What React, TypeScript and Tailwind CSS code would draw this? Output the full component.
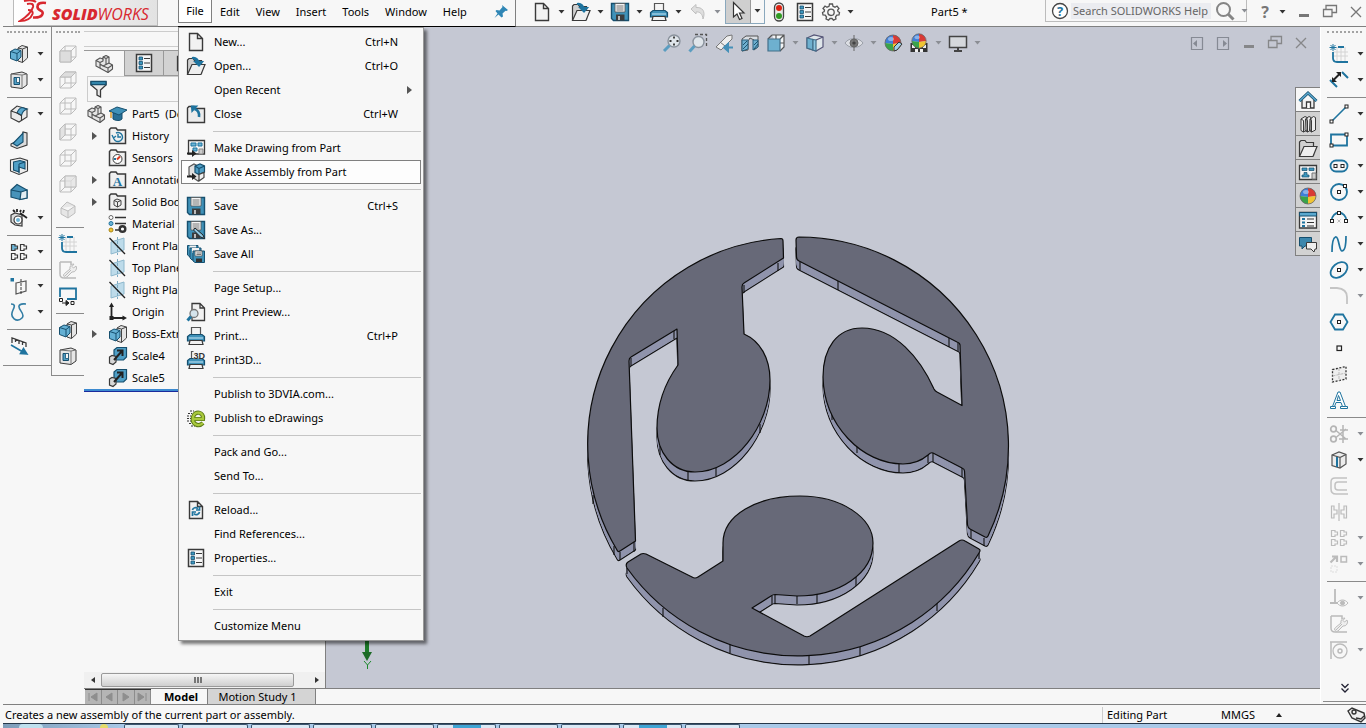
import React from "react";

const INK = "#3a3a3a";
const BLUE = "#1f749f";
const SKY = "#6db4d6";

const doc = <path d="M3.5 1.5H11.5L16.5 6.5V18.5H3.5Z M11.5 1.5V6.5H16.5" fill="#f2f2f2" stroke={INK} strokeWidth="1.4" />;
const folder = (
  <g strokeWidth="1.2" stroke={INK}>
    <path d="M1.5 17.5V4L3 2.5H7L8.500 4.500H15.500V17.500Z" fill="#d0d0d0" />
    <path d="M1.500 18.500L6 8.500H19L15 18.500Z" fill="#efefef" />
  </g>
);
const tab = <path d="M1.5 17.5V4L3 2.5H8L9.500 4.500H18.500V18.500H1.500Z" fill="#ececec" stroke={INK} strokeWidth="1.4" />;
const disk = (
  <g>
    <path d="M1.500 1.500H18.500V18.500H3.500L1.500 16.500Z" fill="#3f91b8" stroke="#164f6e" strokeWidth="1.4" />
    <path d="M5 1.500H15V10H5Z" fill="#f4f4f4" stroke="#555" strokeWidth=".8" />
    <path d="M6.500 4H13.500M6.500 6H13.500M6.500 8H13.500" stroke="#777" />
    <path d="M6 12.500H14.500V18.500H6Z" fill="#3c3c3c" />
    <path d="M8 14H10V18H8Z" fill="#bbb" />
  </g>
);
const printer = (
  <g strokeWidth="1.200">
    <path d="M5.500 9V1.500H14.500V9Z" fill="#f4f4f4" stroke="#555" />
    <path d="M1.500 15V10.500L4 8.500H16L18.500 10.500V15Z" fill="#3f91b8" stroke="#164f6e" />
    <path d="M3 12H17" stroke="#b5dcef" />
    <path d="M4 14.500H16L17 18.500H3Z" fill="#f2f2f2" stroke={INK} />
  </g>
);
const extrude = (
  <g strokeWidth="1">
    <path d="M9 4L13 1.500L18.500 3V14L13.500 18.500L9 17Z" fill="#e4e4e4" stroke="#444" />
    <path d="M13.500 18.500V5L18.500 3M13.500 5L9 4" fill="none" stroke="#444" />
    <path d="M1.500 7.500L6 5L12 6.500V13L8 17L1.500 14.500Z" fill="#64b0d4" stroke="#164f6e" />
    <path d="M1.500 7.500L8 9.500V17M8 9.500L12 6.500" fill="none" stroke="#164f6e" />
  </g>
);
const cut = (
  <g strokeWidth="1">
    <path d="M2 4L13 2L18 4V15L13 18.500L2 17Z" fill="#e6e6e6" stroke={INK} />
    <path d="M13 5V18.500M2 4L13 5L18 4" fill="none" stroke="#777" />
    <path d="M5 7.500H10.500V14.500H5Z" fill="#4f9fc6" stroke="#164f6e" />
    <path d="M7.500 7.500H10.500V12.500H7.500Z" fill="#f6f6f6" stroke="#164f6e" strokeWidth=".8" />
  </g>
);
const wire = <path d="M2 7L7 2H18V13L13 18H2ZM2 7H13V18M13 7L18 2M7 2V13H18M7 13L2 18" fill="none" stroke="#bdbdbd" />;
const part = (
  <g stroke="#555" strokeWidth="1.100" strokeLinejoin="round">
    <path d="M2 6.500L6 4L9 5V3L12 1.500L15 3V9L18.500 11V15L14 18.500L2 12Z" fill="#e6e6e6" />
    <path d="M2 6.500L6 8.500V14M6 8.500L9 7V5M9 3L12 4.500V10.500L15 9M12 4.500L15 3M12 10.500L9 12L14 14V18.500M14 14L18.500 11M6 10L9 12" fill="none" />
  </g>
);
const treeFolder = <path d="M1.500 17.500V3.500L3 2H8L9.500 4H17.500V17.500Z" fill="#f0f0f0" stroke={INK} strokeWidth="1.500" />;
const plane = (
  <g>
    <path d="M3 6L16 2V14L3 18Z" fill="#bddbea" stroke="#8eb8cd" />
    <path d="M9.500 1V19" stroke="#7baac3" strokeDasharray="3 1" />
    <path d="M1.500 2L17 18" stroke="#222" strokeWidth="1.300" />
  </g>
);
const scale = (
  <g strokeWidth="1.200">
    <path d="M6 4L9 1.500H18.500V11L15.500 14H6Z" fill="#4f9fc6" stroke="#164f6e" />
    <path d="M1.500 11L4 9.500L8 10.500V16L5 18.500L1.500 17Z" fill="#d7d7d7" stroke={INK} />
    <path d="M6 14L14 5M9 4.500H14.500V10" stroke="#222" strokeWidth="2" fill="none" />
  </g>
);
const list = (
  <g>
    <path d="M2.500 1.500H17.500V18.500H2.500Z" fill="#f7f7f7" stroke={INK} strokeWidth="1.500" />
    <path d="M5 4H8.500V7H5ZM5 8.500H8.500V11.500H5ZM5 13H8.500V16H5Z" fill="#3c97bf" stroke="#164f6e" strokeWidth=".8" />
    <path d="M10 5.500H16M10 10H16M10 14.500H16" stroke={INK} strokeWidth="1.200" />
  </g>
);
const ball = (
  <g>
    <path d="M10 2A8 8 0 0 0 2 10L10 11Z" fill="#3f7fd8" />
    <path d="M10 2A8 8 0 0 1 18 10L10 11Z" fill="#d93a35" />
    <path d="M2 10A8 8 0 0 0 10 18V11Z" fill="#3aa34a" />
    <path d="M18 10A8 8 0 0 1 10 18V11Z" fill="#f0c433" />
    <circle cx="10" cy="10" r="8" fill="none" stroke="#666" strokeWidth=".8" />
    <ellipse cx="8" cy="6" rx="3" ry="2" fill="#fff" opacity=".4" />
  </g>
);
const sketchCorner = (
  <g fill="none">
    <path d="M4 8H19M4 12H19M8 3V18M12 3V18M16 3V18" stroke="#d4d4d4" />
    <path d="M9 3H15M4 8V14Q4 18 8 18H19" stroke={BLUE} strokeWidth="1.800" />
    <path d="M4 0V7M.5 3.500H7.500M1.500 1L6.500 6M6.500 1L1.500 6" stroke={BLUE} />
  </g>
);
const wrench = (
  <g fill="none" stroke="#bbb">
    <path d="M2 2V14Q2 18 6 18H18M2 2H13V5" strokeWidth="1.500" />
    <path d="M7 16L13 10M18 6L15.500 8L14 6.500L16 4A4 4 0 0 0 12 9L6.500 13.500A2 2 0 0 0 9 17L14 12A4 4 0 0 0 18 6Z" fill="#eee" />
  </g>
);
const pattern = (stroke: string, fill: string) => (
  <g stroke={stroke} strokeWidth="1.200" fill="none">
    <path d="M2.500 2.500H6V4H8.500V7H6V8.500H2.500Z" fill={fill} />
    <path d="M11.500 2.500H15V4H17.500V7H15V8.500H11.500ZM2.500 11.500H6V13H8.500V16H6V17.500H2.500ZM11.500 11.500H15V13H17.500V16H15V17.500H11.500Z" />
  </g>
);
const refplane = (
  <g fill="none">
    <path d="M7 7L17 5V15L7 18Z" stroke="#555" strokeWidth="1.200" />
    <path d="M12 3V19" stroke={INK} strokeDasharray="3 1" />
    <path d="M1.500 2H5V5.500H1.500Z" fill={BLUE} />
  </g>
);
const restore = <path d="M6 7V3.500H16.500V10.500H12M3.500 7.500H12V14.500H3.500Z" fill="none" stroke="#777" strokeWidth="1.300" />;
const node = (x: number, y: number) => <rect x={x - 1.5} y={y - 1.5} width="3" height="3" fill="#fff" stroke="#222" />;
const dice = (
  <g stroke="#555" strokeWidth="1.200">
    <path d="M3 5L10 2L17 4.500V14L11 18L3 15.500Z" fill="#ececec" />
    <path d="M3 5L11 7.500V18M11 7.500L17 4.500" fill="none" />
  </g>
);

const ICONS: Record<string, React.ReactNode> = {
  doc,
  open: <g>{folder}<path d="M6 2C10 1 13 4 13 8M13 9.500L9.500 6H16Z" stroke={BLUE} strokeWidth="2" fill={BLUE} /></g>,
  close: <g>{tab}<path d="M13 13C13.500 9 12 6 8.500 5" stroke={BLUE} strokeWidth="2.600" fill="none" /><path d="M5.500 2H11L6 7.500Z" stroke={BLUE} strokeWidth="1.200" fill={BLUE} /></g>,
  drawing: (
    <g>
      <path d="M2.500 2.500H18.500V16H2.500Z" fill="#f4f4f4" stroke={INK} strokeWidth="1.300" />
      <path d="M5 5H10V8H5ZM12 5H16V8H12ZM7 10H11V13H7Z" fill={SKY} stroke={BLUE} />
      <path d="M13 11H17V16H13Z" fill="#ccc" stroke="#888" />
      <path d="M1 15.500H7" stroke="#222" strokeWidth="2" />
      <path d="M6 12L10.500 15.500L6 19Z" fill="#222" />
    </g>
  ),
  assembly: (
    <g strokeWidth="1.200">
      <path d="M3 5L8 2L12 4V10L17 9V15L12 19L3 13Z" fill="#e0e0e0" stroke="#555" />
      <path d="M9 4L14 2L18.500 4V10L13 12.500L9 10.500Z" fill="#4f9fc6" stroke="#164f6e" />
      <path d="M9 4L13 6.500V12.500M13 6.500L18.500 4" fill="none" stroke="#164f6e" />
      <path d="M13 12.500V19L18 15.500V10.500Z" fill="#f0f0f0" stroke="#444" />
      <path d="M1 14.500H7" stroke="#222" strokeWidth="2" />
      <path d="M6 11L10.500 14.500L6 18Z" fill="#222" />
    </g>
  ),
  save: disk,
  saveas: <g>{disk}<path d="M9 8L17 15L18.500 18.500L14.500 17L7.500 10Z" fill="#8fc7e2" stroke="#222" /></g>,
  saveall: (
    <g>
      <path d="M1.500 1.500H12V13H4L1.500 11Z" fill="#3f91b8" stroke="#164f6e" />
      <path d="M3.500 1.500H10V6H3.500Z" fill="#f2f2f2" />
      <path d="M4 4H15V16H6L4 14Z" fill="#3f91b8" stroke="#164f6e" />
      <path d="M6 4H13V9H6Z" fill="#f2f2f2" />
      <path d="M7 7H18.500V18.500H9L7 17Z" fill="#3f91b8" stroke="#164f6e" />
      <path d="M9 7H16V12H9Z" fill="#f2f2f2" stroke="#555" strokeWidth=".7" />
      <path d="M10.500 9H15M10.500 10.500H15" stroke="#777" />
      <path d="M10 14.500H16V18H10Z" fill="#333" />
    </g>
  ),
  preview: (
    <g>
      <path d="M6 1.500H14L18.500 6V18.500H6Z M14 1.500V6H18.500" fill="#f2f2f2" stroke={INK} strokeWidth="1.300" />
      <circle cx="8" cy="11.500" r="4" fill="#d4e3eb" stroke="#777" strokeWidth="1.300" />
      <path d="M5 14.500L1.500 18.500" stroke={BLUE} strokeWidth="3" />
    </g>
  ),
  print: printer,
  print3d: <g>{printer}<path d="M7.500 1H18.500V8.500H7.500Z" fill="#f4f4f4" /><text x="7.500" y="8.500" fontSize="9" fontWeight="700" fontFamily="Liberation Sans, sans-serif" fill="#333">3D</text></g>,
  edrawings: (
    <g>
      <path d="M4 3H8M2 5.500H6M1 8H5M1 10.500H5M1 13H5M3 15.500H7M5 18H9" stroke="#333" strokeDasharray="2 1" />
      <path d="M7 11H17C18 4 9 2 7 9C5.500 17 13 19 17 15" fill="none" stroke="#5c7a17" strokeWidth="4.200" />
      <path d="M7 11H17C18 4 9 2 7 9C5.500 17 13 19 17 15" fill="none" stroke="#a9c93c" strokeWidth="2.400" />
    </g>
  ),
  reload: <g>{doc}<path d="M6.500 10C7 7.500 10 7 12 8.500M13.500 6.500V10H10M13.500 12C13 15 9.500 15.500 8 13.500M6.500 16V12H10" fill="none" stroke={BLUE} strokeWidth="1.700" /></g>,
  list,
  undo: <path d="M3 7L8 2.500V5.500C14 5 18 9 15 17C14.500 12 12 9.500 8 10V12Z" fill="#dedede" stroke="#c0c0c0" />,
  cursor: <path d="M5.500 1.500V16L9 13L11.500 18.500L14 17.500L11.500 12H16Z" fill="#fff" stroke="#333" strokeWidth="1.200" />,
  traffic: (
    <g>
      <rect x="5.500" y="1" width="9" height="18" rx="4.500" fill="#e8e8e8" stroke="#444" strokeWidth="1.300" />
      <circle cx="10" cy="6" r="3" fill="#dd2211" />
      <circle cx="10" cy="14" r="3" fill="#2f9a22" />
    </g>
  ),
  gear: (
    <g fill="none" stroke="#555">
      <path d="M8.500 2H11.500L12 4.300L14 5.200L16 4L18 6.500L16.600 8.200L17 9.500L18.500 10.500L18 13L15.800 13.200L14.500 15L15 17L12.500 18.200L11 16.500H9L7.500 18.200L5 17L5.500 15L4.200 13.200L2 13L1.500 10.500L3.200 9.500L3.500 8L2 6.500L4 4L6 5.200L8 4.300Z" strokeWidth="1.300" />
      <circle cx="10" cy="10.300" r="3.200" strokeWidth="1.300" />
    </g>
  ),
  help: <g><circle cx="10" cy="10" r="7.500" fill="#fff" stroke="#444" strokeWidth="1.300" /><text x="10" y="14.500" textAnchor="middle" fontSize="13" fontWeight="700" fontFamily="Open Sans, sans-serif" fill={BLUE}>?</text></g>,
  search: <g fill="none" stroke="#858585"><circle cx="8.500" cy="8.500" r="6.500" strokeWidth="2" /><path d="M13 13L18.500 18.500" strokeWidth="3" /></g>,
  min: <path d="M5 13.500H15" stroke="#777" strokeWidth="3" />,
  restore,
  x: <path d="M5 5L15 15M15 5L5 15" stroke="#777" strokeWidth="1.300" />,
  paneL: <g><path d="M4.500 4.500H15.500V16.500H4.500Z" stroke="#777b85" strokeWidth="1.200" /><path d="M10 7V14L6 10.500Z" fill="#777b85" /></g>,
  paneR: <g><path d="M4.500 4.500H15.500V16.500H4.500Z" stroke="#777b85" strokeWidth="1.200" /><path d="M10 7V14L14 10.500Z" fill="#777b85" /></g>,
  pin: <path d="M11 3L17 8L15.500 9L14.500 8.800L11.500 11.500L12 14.500L10.500 15.500L7.500 12.500L3.500 16L6.500 11.500L4.500 9L5.500 8L8.500 8.500L11.500 5Z" fill="#2f86b5" />,

  extrude,
  cut,
  fillet: <g strokeWidth="1.100"><path d="M2 7L8 2L18 5V13L10 18L2 14Z" fill="#eaeaea" stroke={INK} /><path d="M8 9C9 6 11 4 13 3.500L18 5C15 6 13 9 12.500 11.500Z" fill="#5ba9cf" stroke="#164f6e" /><path d="M2 7L8 9L12.500 11.500V17" fill="none" stroke={INK} /></g>,
  rib: <g strokeWidth="1.100"><path d="M2 14L12 9L14 2L18 3V15L8 18.500L2 16Z" fill="#dcdcdc" stroke={INK} /><path d="M4 13.500L14 3V12L8 16Z" fill="#4f9fc6" stroke="#164f6e" /></g>,
  shell: <g strokeWidth="1.100"><path d="M1.500 4L11 2L18.500 4.500V15L10 18.500L1.500 15Z" fill="#ececec" stroke={INK} /><path d="M4.500 6L11 4.500L16 6V13L10 11L10 16L4.500 14Z" fill="#4f9fc6" stroke="#164f6e" /><path d="M10 8V17.500M10 8L16 6" fill="none" stroke="#164f6e" /></g>,
  draft: <g strokeWidth="1.200"><path d="M2 8L8 2.500L18 8V16L11 17.500L2 15Z" fill="#4793ba" stroke="#164f6e" /><path d="M12 10L18 8V16L11 17.500Z" fill="#e2edf2" stroke="#164f6e" /><path d="M2 8L12 10" stroke="#164f6e" /></g>,
  wizard: <g strokeWidth="1.200"><path d="M2 7L6 5L13 7V18L6 17L2 14Z" fill="#ddd" stroke={INK} /><circle cx="9" cy="12" r="4" fill="#fff" stroke={INK} /><circle cx="9" cy="12" r="2" fill={SKY} /><path d="M11 5L18 10M4 2L6 4M8 1V4M12 2L11 4M15 2L14 5" stroke="#222" strokeWidth="1.800" /></g>,
  pattern: pattern(INK, SKY),
  patternOff: pattern("#bbb", "none"),
  refplane,
  curve: <path d="M2 2C6 2 6 4 4 8C0 16 8 21 13 16C17 12 9 8 10 4C11 1 14 2 17 2" fill="none" stroke="#337ea5" strokeWidth="1.600" />,
  instant: <g fill="none"><path d="M3 7V2L17 7V11M6.500 3.500V6M10 5V8M13.500 6V9" stroke={INK} strokeWidth="1.300" /><path d="M2 9L14 16M18 18L11.500 17.500L14.500 12.500Z" stroke={BLUE} strokeWidth="1.600" fill={BLUE} /></g>,
  w1: <g>{wire}<path d="M2 7H13V18H2Z" fill="#ddd" stroke="#bbb" /></g>,
  w2: <g>{wire}<path d="M2 7L7 2H18L13 7Z" fill="#ddd" stroke="#bbb" /></g>,
  w3: wire,
  w4: <g>{wire}<path d="M2 7L7 2V13L2 18Z" fill="#e3e3e3" stroke="#bbb" /></g>,
  w5: <g>{wire}<path d="M7 2H18V13H7Z" fill="#e3e3e3" stroke="#bbb" opacity=".7" /></g>,
  w6: <path d="M3 8L9 2L17 6V13L10 18L3 14ZM3 8L10 11L17 6M10 11V18" fill="#e6e6e6" stroke="#bdbdbd" />,
  sketchCorner,
  wrench,
  select2: <g fill="none"><path d="M2 11V2.500H18V13H9" stroke={BLUE} strokeWidth="1.800" /><path d="M1.500 12.500H4.500V15.500H1.500ZM13 15.500H16V18.500H13Z" stroke="#222" /><path d="M4 17H8M8 14.500L11 17L8 19.500Z" fill="#222" stroke="#222" /></g>,

  part,
  filter: <g strokeWidth="1.300"><path d="M2 3H17V6L11.500 11V18L8 16V11L2 6Z" fill="#eaeaea" stroke={INK} /><path d="M2 2.500H17V5.500H2Z" fill="#3c97bf" stroke="#164f6e" /></g>,
  cap: <g><path d="M5 9V15C8 17 12 17 14 15V9Z" fill="#276f96" stroke="#164f6e" /><path d="M1 7L9 3L19 6L11 11Z" fill="#3f91b8" stroke="#164f6e" /><path d="M3 8V14" stroke="#d99b2a" strokeWidth="1.500" /></g>,
  history: <g>{treeFolder}<path d="M5.500 11A4.500 4.500 0 1 0 8 7M10 8V11H13M4 9L5.500 12L8 10" fill="none" stroke={BLUE} strokeWidth="1.400" /></g>,
  sensors: <g>{treeFolder}<circle cx="9.500" cy="11" r="4.500" fill="#fff" stroke={INK} /><path d="M9 11.500L12 8.500" stroke="#d63a22" strokeWidth="2" /><path d="M6 11H8" stroke={BLUE} strokeWidth="2" /></g>,
  annot: <g>{treeFolder}<text x="9.500" y="16" textAnchor="middle" fontSize="13" fontWeight="700" fontFamily="Liberation Serif, serif" fill={BLUE}>A</text></g>,
  solid: <g>{treeFolder}<path d="M6 8.500L9 7L13 8.500V13L9.500 15L6 13ZM6 8.500L9.500 10V15M9.500 10L13 8.500" fill="#eee" stroke="#444" /></g>,
  material: <g><circle cx="3" cy="3.500" r="2" fill="#fff" stroke="#666" /><circle cx="3" cy="9.500" r="2" fill={SKY} stroke={BLUE} /><circle cx="3" cy="16" r="2" fill="#f0c433" stroke="#a88516" /><path d="M7 3.500H18M7 9.500H18M7 16H11" stroke="#333" strokeWidth="1.500" /><circle cx="14.500" cy="15" r="2.800" fill="#fff" stroke="#333" strokeWidth="2.400" /></g>,
  plane,
  origin: <g><path d="M3.500 4V16H15" stroke="#222" strokeWidth="1.800" /><path d="M1 5L3.500 .5L6 5ZM14.500 13.500L19 16L14.500 18.500ZM1.500 14H5.500V18H1.500Z" fill="#222" /></g>,
  scale,

  zoomfit: <g><circle cx="12" cy="8" r="6" fill="#dfe5ea" stroke="#8b939d" strokeWidth="1.400" /><path d="M7.500 12.500L2 18" stroke="#5b9dc0" strokeWidth="3" /><path d="M12 3.500V5.500M12 10.500V12.500M7.500 8H9.500M14.500 8H16.500" stroke="#333" strokeWidth="1.800" /></g>,
  zoomarea: <g><path d="M7 1.500H18.500V13" fill="none" stroke="#555" strokeDasharray="3 2" strokeWidth="1.300" /><circle cx="10.500" cy="9" r="5.500" fill="#dfe5ea" stroke="#8b939d" strokeWidth="1.400" /><path d="M6.500 13L1.500 18.500" stroke="#5b9dc0" strokeWidth="3" /></g>,
  prev: <g><path d="M2 14L13 3L18 2L18 6L7 17Z" fill="#eee" stroke="#777" /><path d="M6 9L11 13" stroke="#777" /><path d="M13 14.500H19M14 11V18L10 14.500Z" stroke="#4590b8" fill="#4590b8" strokeWidth="2" /></g>,
  section: <g stroke="#555"><path d="M2 6L6 3H18V14L14 17V7L10 5L8 8V17L2 18Z" fill="#d9dde2" /><path d="M2 7H8V16L2 18ZM13 7H18V14L13 17Z" fill="#6fb0d0" stroke="#2a5f7c" /><path d="M3 12L7 8M3 16L8 11M14 12L18 8M14 16L18 11" stroke="#1f536f" /></g>,
  orient: <g strokeWidth="1.200"><path d="M6 2H18V14L14 18M2 6L6 2M14 6L18 2M10 2V6M14 10H18" fill="#f2f4f6" stroke="#555" /><path d="M2 6H14V18H2Z" fill="#6eb0cf" stroke="#43708a" /></g>,
  display: <g strokeWidth="1.200"><path d="M2 5L9 2L18 4V14L11 18L2 15Z" fill="#dfe6ea" stroke="#557" /><path d="M2 5L8 6.500V17L2 15Z" fill="#6eb0cf" stroke="#43708a" /><path d="M8 6.500L11 7V18L8 17Z" fill="#8cc7e2" stroke="#43708a" /><path d="M11 7L18 4" stroke="#557" /></g>,
  eye: <g><path d="M1 10C5 4 15 4 19 10C15 16 5 16 1 10Z" fill="#dcdee3" stroke="#9a9fa8" /><circle cx="10" cy="10" r="4" fill="#777" stroke="#666" /><circle cx="10" cy="10" r="1.500" fill="#222" /><path d="M10 2V18" stroke="#666" /></g>,
  appear: <g>{ball}<path d="M11 14L16 9L19 11L14 17L11 18Z" fill="#9ed0e6" stroke="#333" /></g>,
  scene: <g><path d="M1.500 10H18.500V19H1.500Z" fill="#333" /><path d="M3 12H6V15H3ZM14 12H17V15H14ZM6 16H9V19H6ZM11 16H14V19H11Z" fill="#eee" /><g transform="translate(1 -1) scale(.9)">{ball}</g></g>,
  monitor: <g><path d="M1.500 3.500H18.500V14.500H1.500Z" fill="#d5d8dc" stroke="#444" strokeWidth="1.500" /><path d="M10 14.500V18M6 18H14" stroke="#444" strokeWidth="2" /></g>,

  home: <g strokeWidth="1.300"><path d="M4 10V18H16V10" fill="#f0f0f0" stroke={INK} /><path d="M8.500 18V12H12.500V18" fill="#fff" stroke={INK} /><path d="M1.500 11L10 3L18.500 11" fill="none" stroke="#164f6e" strokeWidth="3" /><path d="M1.500 11L10 3L18.500 11" fill="none" stroke="#5ba9cf" /></g>,
  books: <path d="M3 5L7 2.500L9 3.500V16L5.500 18L3 16.500ZM7.500 5L11 2.500L13 3.500V16L9.500 18L7 16.500ZM12 5L15.500 2.500L17.500 3.500V16L13.500 18L11.500 16.500ZM3 5L5.500 6.500V18M7.500 5L9.500 6.500V18M12 5L13.500 6.500V18" fill="#eee" stroke={INK} />,
  folder,
  palette: <g><path d="M1.500 3.500H18.500V17.500H1.500Z" fill="#f4f4f4" stroke={INK} strokeWidth="1.300" /><path d="M4 6H9V8.500H4ZM11 6H16V8.500H11ZM6 10.500H9V13H11V15H4V13H6Z" fill="#3c97bf" stroke="#164f6e" strokeWidth=".7" /><path d="M14 11H18V17H14Z" fill="#ccc" stroke="#777" /></g>,
  ball,
  props: <g><path d="M1.500 2.500H18.500V18H1.500Z" fill="#f4f4f4" stroke={INK} strokeWidth="1.300" /><path d="M1.500 2.500H18.500V6H1.500Z" fill="#5ba9cf" stroke="#164f6e" /><path d="M4 8H7V10H4ZM4 11.500H7V13.500H4ZM4 15H7V17H4Z" fill={BLUE} /><path d="M9 9H16M9 12.500H16M9 16H16" stroke="#333" /></g>,
  chat: <g><path d="M1.500 3.500H13.500V12H7L4 15V12H1.500Z" fill="#3c87ad" stroke="#164f6e" /><path d="M8.500 8.500H18.500V15H17L16 18L13 15H8.500Z" fill="#eee" stroke={INK} /></g>,

  dimension: <g fill="none"><path d="M1 10L8 17M13 2L19 8" stroke={BLUE} strokeWidth="2" /><path d="M4 10.500L11 3.500" stroke="#222" strokeWidth="2" /><path d="M3 12V7L8 12ZM12 2V7L7 2Z" fill="#222" /></g>,
  line: <g><path d="M2 18L17 3" stroke={BLUE} strokeWidth="1.600" />{node(2.5, 17.5)}{node(17.5, 2.5)}</g>,
  rect: <g><path d="M2 4.500H18V15.500H2Z" fill="none" stroke={BLUE} strokeWidth="1.800" />{node(2.5, 15.5)}{node(17.5, 4.5)}</g>,
  slot: <g><rect x="1.500" y="4.500" width="17" height="11" rx="5.500" fill="none" stroke={BLUE} strokeWidth="1.800" />{node(6.5, 10)}{node(13.5, 10)}</g>,
  circle: <g><circle cx="10" cy="10" r="8" fill="none" stroke={BLUE} strokeWidth="1.800" />{node(10, 10)}{node(16, 4)}</g>,
  arc: <g><path d="M2.500 13C3 2 17 2 17.500 13" fill="none" stroke={BLUE} strokeWidth="1.800" /><path d="M8.500 11.500L11.500 14.500M11.500 11.500L8.500 14.500" stroke="#bbb" />{node(10, 5)}{node(3, 13)}{node(17, 13)}</g>,
  spline: <path d="M3 18C3 11 4 4 6.500 3C10 2 10 17 13 17C16 17 17 9 17 2" fill="none" stroke={BLUE} strokeWidth="1.700" />,
  ellipse: <g><ellipse cx="10" cy="10" rx="9.500" ry="6.500" transform="rotate(-40 10 10)" fill="none" stroke={BLUE} strokeWidth="1.800" />{node(10, 10)}</g>,
  filletOff: <path d="M1 2H8Q18 3 18 11V18" fill="none" stroke="#c4c4c4" strokeWidth="1.800" />,
  hexagon: <g><path d="M6 2.500H14L18.500 10L14 17.500H6L1.500 10Z" fill="none" stroke={BLUE} strokeWidth="1.800" />{node(10, 10)}</g>,
  point: <rect x="8" y="8" width="4.500" height="4.500" fill="none" stroke="#222" strokeWidth="1.200" />,
  dashplane: <g><path d="M3.500 5.500L17 2.500V15L3.500 18Z" fill="#eee" stroke="#333" strokeDasharray="2 1.500" strokeWidth="1.300" /><path d="M3.500 12L17 9M10 4V17" stroke="#bbb" strokeDasharray="3 1" /></g>,
  text: <g stroke={BLUE} strokeWidth="1"><path d="M1.500 16.500H6.500V18.500H1.500ZM11.500 16.500H18.500V18.500H11.500Z" fill="#fff" /><path d="M3.500 16.500L9 2H11L16.500 16.500H13.500L12 12.500H7L5.500 16.500ZM8 10.500H11.500L9.500 5.500Z" fill="#fff" fillRule="evenodd" /></g>,
  trim: <g fill="none" stroke="#b5b5b5"><circle cx="4.500" cy="5" r="2.800" strokeWidth="1.700" /><circle cx="4.500" cy="15" r="2.800" strokeWidth="1.700" /><path d="M7 6.500L17 15M7 13.500L17 5M14 1V19M10 15H19M11 6H19" strokeWidth="1.500" /></g>,
  convert: <g>{dice}<path d="M8 7V17" stroke={BLUE} strokeWidth="2" /></g>,
  offset: <path d="M18 2H6Q2 2 2 6V13Q2 18 7 18H19M18 6H9Q6 6 6 9V11Q6 14 9 14H18" fill="none" stroke="#c2c2c2" strokeWidth="1.500" />,
  mirror: <path d="M10 1V19M2.500 4H5V8H8V12H5V16H2.500ZM17.500 4H15V8H12V12H15V16H17.500Z" fill="none" stroke="#bbb" strokeWidth="1.200" />,
  move: <g fill="none" stroke="#bbb"><path d="M12 2.500H17.500V8H12Z" strokeWidth="1.500" /><path d="M1.500 8.500L7 3M3 2.500H8V8" strokeWidth="2.200" /><path d="M2 12H8V18H2Z" stroke="#ddd" strokeDasharray="2 1" /></g>,
  relations: <g fill="none" stroke="#bbb"><path d="M6 1V15M1 15H8" strokeWidth="1.800" /><path d="M8 15C11 11 16 11 19 15C16 19 11 19 8 15Z" /><circle cx="13.500" cy="15" r="2" fill="#bbb" /></g>,
  snap: <g fill="none" stroke="#bbb"><path d="M1 2H18M2 2V19" strokeWidth="1.500" /><circle cx="11" cy="11" r="7" strokeWidth="1.300" /><circle cx="11" cy="11" r="2" strokeWidth="1.500" /></g>,
  tag: <g strokeWidth="1.400"><path d="M2 6L6 3L18 8L19 13L15 17L6 13Z" fill="#eee" stroke="#333" /><circle cx="8" cy="7" r="2" fill="none" stroke="#333" /><path d="M10 13L15 14L18 11" fill="none" stroke="#333" /></g>,
};

function Icon({ name }: { name: string }) {
  return (
    <svg viewBox="0 0 20 20" className="block h-5 w-5 shrink-0" fill="none" aria-hidden="true">
      {ICONS[name]}
    </svg>
  );
}

function IconButton({ name, label }: { name: string; label: string }) {
  return (
    <button type="button" aria-label={label} className="block h-5 w-5 shrink-0">
      <Icon name={name} />
    </button>
  );
}

function Drop({ label, muted = false }: { label: string; muted?: boolean }) {
  return (
    <button type="button" aria-label={`${label} options`} className={muted ? "w-[7px] shrink-0 text-[#8b8e94]" : "w-[7px] shrink-0 text-[#333]"}>
      <svg viewBox="0 0 7 4" className="block h-1 w-[7px]" aria-hidden="true">
        <path d="M.5 0H6.500L3.500 3.500Z" fill="currentColor" />
      </svg>
    </button>
  );
}

type Tool = [string, string, ("drop" | "muted")?] | null;

function ToolColumn({ tools }: { tools: Tool[] }) {
  return (
    <>
      <div className="mx-1 mt-1 mb-2 h-0.5 border-t-2 border-dotted border-[#a3a3a3]" />
      {tools.map((t, i) =>
        t === null ? (
          <div key={i} className="flex h-2 items-center pl-1">
            <div className="h-px w-full bg-[#8a8a8a]" />
          </div>
        ) : (
          <div key={i} className="flex h-[26px] items-center gap-2 pl-1.5">
            <IconButton name={t[0]} label={t[1]} />
            {t[2] && <Drop label={t[1]} muted={t[2] === "muted"} />}
          </div>
        ),
      )}
    </>
  );
}

const featureTools: Tool[] = [
  ["extrude", "Extruded Boss", "drop"], ["cut", "Extruded Cut", "drop"], null,
  ["fillet", "Fillet", "drop"], ["rib", "Rib"], ["shell", "Shell"], ["draft", "Draft"], ["wizard", "Hole Wizard", "drop"], null,
  ["pattern", "Linear Pattern", "drop"], null,
  ["refplane", "Reference Geometry", "drop"], ["curve", "Curves", "drop"], null,
  ["instant", "Instant3D"],
];
const viewTools: Tool[] = [
  ["w1", "Front"], ["w2", "Top"], ["w3", "Back"], ["w4", "Left"], ["w3", "Bottom"], ["w5", "Right"], ["w6", "Isometric"], null,
  ["sketchCorner", "Sketch"], ["wrench", "Repair Sketch"], ["select2", "Convert"], null,
  ["extrude", "Boss"], ["cut", "Cut"],
];
const sketchTools: Tool[] = [
  ["sketchCorner", "New Sketch", "drop"], ["dimension", "Smart Dimension", "drop"], null,
  ["line", "Line", "drop"], ["rect", "Rectangle", "drop"], ["slot", "Slot", "drop"], ["circle", "Circle", "drop"], ["arc", "Arc", "drop"],
  ["spline", "Spline", "drop"], ["ellipse", "Ellipse", "drop"], ["filletOff", "Sketch Fillet", "muted"], ["hexagon", "Polygon"],
  ["point", "Point"], ["dashplane", "Plane"], ["text", "Text"], null,
  ["trim", "Trim", "muted"], ["convert", "Convert Entities", "drop"], ["offset", "Offset"], ["mirror", "Mirror"],
  ["patternOff", "Sketch Pattern", "muted"], ["move", "Move", "muted"], null,
  ["relations", "Relations", "muted"], ["wrench", "Repair"], ["snap", "Quick Snaps", "muted"],
];

const tree: [string, string, boolean][] = [
  ["history", "History", true], ["sensors", "Sensors", false], ["annot", "Annotations", true], ["solid", "Solid Bodies", true],
  ["material", "Material <not specified>", false], ["plane", "Front Plane", false], ["plane", "Top Plane", false], ["plane", "Right Plane", false],
  ["origin", "Origin", false], ["extrude", "Boss-Extrude1", true], ["scale", "Scale4", false], ["scale", "Scale5", false],
];

type MenuEntry = { label: string; icon?: string; keys?: string; sub?: boolean; active?: boolean } | null;
const fileMenu: MenuEntry[] = [
  { label: "New...", icon: "doc", keys: "Ctrl+N" },
  { label: "Open...", icon: "open", keys: "Ctrl+O" },
  { label: "Open Recent", sub: true },
  { label: "Close", icon: "close", keys: "Ctrl+W" },
  null,
  { label: "Make Drawing from Part", icon: "drawing" },
  { label: "Make Assembly from Part", icon: "assembly", active: true },
  null,
  { label: "Save", icon: "save", keys: "Ctrl+S" },
  { label: "Save As...", icon: "saveas" },
  { label: "Save All", icon: "saveall" },
  null,
  { label: "Page Setup..." },
  { label: "Print Preview...", icon: "preview" },
  { label: "Print...", icon: "print", keys: "Ctrl+P" },
  { label: "Print3D...", icon: "print3d" },
  null,
  { label: "Publish to 3DVIA.com..." },
  { label: "Publish to eDrawings", icon: "edrawings" },
  null,
  { label: "Pack and Go..." },
  { label: "Send To..." },
  null,
  { label: "Reload...", icon: "reload" },
  { label: "Find References..." },
  { label: "Properties...", icon: "list" },
  null,
  { label: "Exit" },
  null,
  { label: "Customize Menu" },
];

function FileMenu() {
  return (
    <div role="menu" aria-label="File" className="absolute top-[27px] left-[178px] z-20 w-[246px] border border-[#979797] bg-[#f7f7f7] p-0.5 shadow-[3px_3px_3px_rgba(0,0,0,0.5)]">
      {fileMenu.map((m, i) =>
        m === null ? (
          <div key={i} className="flex h-2.5 items-center pl-8">
            <div className="h-px w-full bg-[#c5c5c5]" />
          </div>
        ) : (
          <button
            key={i}
            type="button"
            role="menuitem"
            className={
              m.active
                ? "flex h-6 w-full items-center border border-[#808080] bg-[#fdfdfd] pr-[22px] pl-1 text-left"
                : "flex h-6 w-full items-center border border-transparent pr-[22px] pl-1 text-left"
            }
          >
            <span className="w-7 shrink-0">{m.icon && <Icon name={m.icon} />}</span>
            <span className="flex-1">{m.label}</span>
            {m.keys && <span>{m.keys}</span>}
            {m.sub && (
              <svg viewBox="0 0 5 8" className="-mr-3.5 h-2 w-[5px]" aria-hidden="true">
                <path d="M0 0L5 4L0 8Z" fill="#555" />
              </svg>
            )}
          </button>
        ),
      )}
    </div>
  );
}

const bodies = [
  {
    face: "M781 238.500Q783 238.500 783 241L783.500 258L744 283Q742 284 742 287L744 334C760 341 770 358 770 380C770 425 735 472 695 472C672 472 657 452 657 428C657 405 665 383 678 365L677 329L631 357Q629 358 629 361L635.500 541L620 551Q618 552.500 617 550A206 206 0 0 1 781 238.500Z",
    ribs: "M688 472V481M716 467V476M760 424V433M660 446V455M593 495V504M614 546V555M620 552V560M634 542V552M674 331V339M631 358V366M778 263V271M744 285V293",
  },
  {
    face: "M799 237A210 209 0 0 1 988 536Q987 538 985 537L970 529Q968 528 967.500 525L964.500 471Q964.500 469 962 468L933 453Q931 452 928 455C921 461 914 464 903 464C862 464 824 425 823 377C823 348 837 328 862 328C895 328 920 358 934 389Q935 391 937 392L962 405.500L960 345Q960 343 957 342L799 261Q796.500 260 796.500 257L796 240Q796 237 799 237Z",
    ribs: "M838 281V290M949 338V347M958 343V351M800 262V270M832 411V420M857 445V453M899 464V473M928 455V463M933 453V462M962 468V477M971 530V538M984 538V546",
  },
  {
    face: "M628 562L641 554Q643 553 646 554L692 577Q695 579 698 577L723 561V543C723 515 757 496 800 496C842 496 873 518 873 543C873 573 840 596 797 596L775 594.500Q773 594.500 771 596L752 608L804 636Q807 637.500 810 636L959 541Q962 539 965 541L979 549Q981 550 979 553A210 209 0 0 1 627 568Q625 564 628 562Z",
    ribs: "M663 608V617M730 644V653M809 656V665M860 647V656M937 602V611M797 596V604M817 594V603M856 577V586M775 595V604M772 596V604M627 568V574M979 553V559",
  },
];

function Model() {
  return (
    <svg viewBox="326 27 994 661" className="absolute inset-0 h-full w-full" aria-label="Part model">
      {bodies.map((b, i) => (
        <g key={i}>
          <path d={b.face} transform="translate(0 9)" fill="#9094ac" stroke="#111" strokeWidth="1.200" />
          {[8, 7, 6, 5, 4, 3, 2, 1].map((dy) => (
            <path key={dy} d={b.face} transform={`translate(0 ${dy})`} fill="#9094ac" />
          ))}
          <path d={b.ribs} stroke="#111" strokeWidth="1.100" />
          <path d={b.face} fill="#676978" stroke="#0c0c0c" strokeWidth="1.200" strokeLinejoin="round" />
        </g>
      ))}
      <path d="M367 625V653" stroke="#1c7a28" strokeWidth="4" />
      <path d="M362 652H372L367 661Z" fill="#1c6a26" />
      <path d="M364 661L367.500 665L371 661M367.500 665V669" fill="none" stroke="#1c8a2c" />
    </svg>
  );
}

const navShapes = ["M3 3V11M11 3V11L5 7Z", "M10 3V11L4 7Z", "M4 3V11L10 7Z", "M11 3V11M3 3V11L9 7Z"];

export default function App() {
  return (
    <div className="relative flex h-screen flex-col overflow-hidden bg-[#f7f7f7] pl-[3px] font-['Noto_Sans','Segoe_UI',sans-serif] text-[11px] leading-4 text-black">
      <header className="flex h-[27px] shrink-0 border-b border-[#808080]">
        <div className="ml-2.5 flex h-[26px] w-[145px] shrink-0 items-start border-r border-b border-l border-[#bbb] bg-linear-to-r from-white to-[#e2e2e2] pl-1">
          <svg viewBox="0 0 30 24" className="h-6 w-[30px] shrink-0" aria-hidden="true">
            <path d="M9 4Q16 2.500 15 7Q13 14 2 21Q12 21 14.500 14Q15.500 10 10 10" fill="none" stroke="#d8282f" strokeWidth="2" />
            <path d="M6 1Q14 -1 18 2" fill="none" stroke="#d8282f" strokeWidth="2" />
            <path d="M28 3Q20 2 19.500 6Q19 9 22.500 10.500Q26 12 24 15Q22 18 15 17.500" fill="none" stroke="#d8282f" strokeWidth="2.600" />
          </svg>
          <span className="mt-1 ml-1 font-['Open_Sans',sans-serif] text-[16px] leading-5 text-[#d8282f] italic">
            <b className="font-extrabold">SOLID</b>WORKS
          </span>
        </div>
        <nav aria-label="Main menu" className="-mb-px ml-5 flex shrink-0 items-start border-r border-b border-r-[#808080] border-b-black pr-1">
          <button type="button" className="h-[23px] w-[34px] border border-t-0 border-[#808080] bg-white">File</button>
          <div className="flex h-[23px] items-center gap-4 pl-2">
            {["Edit", "View", "Insert", "Tools", "Window", "Help"].map((m) => (
              <button key={m} type="button">{m}</button>
            ))}
          </div>
          <span className="mt-0.5 ml-6"><IconButton name="pin" label="Keep menu open" /></span>
        </nav>
        <div className="flex h-[23px] shrink-0 items-center gap-1 pl-4">
          <div className="flex items-center gap-1.5">
            <IconButton name="doc" label="New" /><Drop label="New" />
            <IconButton name="open" label="Open" /><Drop label="Open" />
            <IconButton name="save" label="Save" /><Drop label="Save" />
            <IconButton name="print" label="Print" /><Drop label="Print" />
            <IconButton name="undo" label="Undo" /><Drop label="Undo" muted />
          </div>
          <div className="flex h-6 items-center border border-t-0 border-[#8aa8bd]">
            <span className="flex h-6 items-center border-r border-[#999] bg-[#cfcfcf] px-0.5"><IconButton name="cursor" label="Select" /></span>
            <span className="flex px-[3px]"><Drop label="Select" /></span>
          </div>
          <div className="flex items-center gap-1.5">
            <IconButton name="traffic" label="Rebuild" />
            <IconButton name="list" label="File properties" />
            <IconButton name="gear" label="Options" /><Drop label="Options" />
          </div>
        </div>
        <div className="h-[23px] flex-1 text-center leading-[23px]">Part5 *</div>
        <div className="flex h-[22px] w-[202px] shrink-0 items-center border border-t-0 border-[#bcbcbc] pl-1">
          <Icon name="help" />
          <input aria-label="Search SOLIDWORKS Help" placeholder="Search SOLIDWORKS Help" className="ml-px h-4 w-[140px] bg-[#ebecf0] pl-0.5 text-[#555] placeholder:text-[#666]" />
          <span className="mr-1.5 ml-1"><IconButton name="search" label="Search" /></span>
          <Drop label="Search" muted />
        </div>
        <div className="flex h-[23px] shrink-0 items-center gap-1 pl-2">
          <button type="button" aria-label="Help" className="w-5 text-center text-[16px] leading-[22px] font-bold text-[#777]">?</button>
          <Drop label="Help" />
          <span className="flex gap-1.5 pl-1">
            <IconButton name="min" label="Minimize" />
            <IconButton name="restore" label="Restore" />
            <IconButton name="x" label="Close" />
          </span>
        </div>
      </header>

      <FileMenu />

      <div className="flex min-h-0 flex-1 border-b border-[#808080]">
        <aside aria-label="Features toolbar" className="w-[49px] shrink-0 self-start border-r border-b border-[#8a8a8a] pb-1.5">
          <ToolColumn tools={featureTools} />
        </aside>
        <aside aria-label="Views toolbar" className="-ml-px w-[33px] shrink-0 self-start border-b border-l border-[#8a8a8a] pb-1.5">
          <ToolColumn tools={viewTools} />
        </aside>

        <main className="flex min-w-0 flex-1 flex-col">
          <div className="flex min-h-0 flex-1 border-b border-[#808080]">
            <section aria-label="Feature tree" className="flex w-[242px] shrink-0 flex-col border-r border-[#808080]">
              <div className="mt-1 h-4 border-t border-b border-[#ccc]" />
              <div className="mt-[3px] flex h-[26px] shrink-0 border-t border-[#999]">
                <button type="button" aria-label="Feature manager" className="flex w-10 items-center justify-center"><Icon name="part" /></button>
                <button type="button" aria-label="Property manager" className="flex w-10 items-center justify-center border border-t-0 border-[#999] bg-[#d2d2d2]"><Icon name="list" /></button>
                <button type="button" aria-label="Configurations" className="flex w-10 items-center border-r border-b border-[#999] bg-[#d2d2d2] pl-3"><Icon name="palette" /></button>
              </div>
              <div className="mx-[3px] h-[26px] shrink-0 border border-[#ccc] pt-0.5 pl-px"><IconButton name="filter" label="Filter" /></div>
              <ul className="pt-px">
                <li className="flex h-[22px] items-center whitespace-nowrap"><span className="ml-0.5"><Icon name="part" /></span><span className="mr-1 ml-0.5"><Icon name="cap" /></span>Part5&nbsp; (Default)</li>
                {tree.map(([icon, label, open]) => (
                  <li key={label} className="flex h-[22px] items-center gap-1 pl-1.5 whitespace-nowrap">
                    <span className="w-3.5">
                      {open && <svg viewBox="0 0 5 8" className="ml-0.5 h-2 w-[5px]" aria-hidden="true"><path d="M0 0L5 4L0 8Z" fill="#555" /></svg>}
                    </span>
                    <Icon name={icon} />
                    <span>{label}</span>
                  </li>
                ))}
              </ul>
              <div className="h-[3px] border-b border-[#1a2a9c] bg-[#3c8ad0]" />
              <div className="mt-auto flex h-4 shrink-0 items-center bg-[#f0f0f0] text-[#333]">
                <button type="button" aria-label="Scroll left" className="flex w-[17px] justify-center"><svg viewBox="0 0 4 6" className="h-1.5 w-1"><path d="M4 0V6L0 3Z" fill="currentColor" /></svg></button>
                <div className="flex h-3.5 w-[193px] items-center justify-center gap-px rounded-xs border border-[#999] bg-linear-to-b from-[#f6f6f6] to-[#cfcfcf]">
                  <i className="h-1.5 w-0.5 bg-[#777]" /><i className="h-1.5 w-0.5 bg-[#777]" /><i className="h-1.5 w-0.5 bg-[#777]" />
                </div>
                <button type="button" aria-label="Scroll right" className="ml-auto flex w-[17px] justify-center"><svg viewBox="0 0 4 6" className="h-1.5 w-1"><path d="M0 0V6L4 3Z" fill="currentColor" /></svg></button>
              </div>
            </section>

            <section aria-label="Graphics area" className="relative min-w-0 flex-1 bg-[#c5c8d3]">
              <Model />
              <div className="relative flex h-8 items-center justify-center gap-1.5 pr-1">
                <IconButton name="zoomfit" label="Zoom to fit" />
                <IconButton name="zoomarea" label="Zoom to area" />
                <IconButton name="prev" label="Previous view" />
                <IconButton name="section" label="Section view" />
                <IconButton name="orient" label="View orientation" /><Drop label="View orientation" muted />
                <IconButton name="display" label="Display style" /><Drop label="Display style" muted />
                <IconButton name="eye" label="Hide or show items" /><Drop label="Hide or show items" muted />
                <IconButton name="appear" label="Edit appearance" />
                <IconButton name="scene" label="Apply scene" /><Drop label="Apply scene" muted />
                <IconButton name="monitor" label="View settings" /><Drop label="View settings" muted />
                <div className="absolute top-1.5 right-[9px] flex gap-1.5 opacity-80">
                  <IconButton name="paneL" label="Collapse left pane" />
                  <IconButton name="paneR" label="Collapse right pane" />
                  <IconButton name="min" label="Minimize document" />
                  <IconButton name="restore" label="Restore document" />
                  <IconButton name="x" label="Close document" />
                </div>
              </div>
              <div className="absolute top-[60px] right-0 w-[25px] border-t border-l border-[#808080]">
                {[["home", "Resources"], ["books", "Design Library"], ["folder", "File Explorer"], ["palette", "View Palette"], ["ball", "Appearances"], ["props", "Custom Properties"], ["chat", "Forum"]].map(([icon, label], i) => (
                  <button key={icon} type="button" aria-label={label} className={i === 0 ? "flex h-6 w-6 items-center justify-center border-b border-[#808080] bg-[#f7f7f7]" : "flex h-6 w-6 items-center justify-center border-b border-[#808080] bg-[#d2d2d2]"}>
                    <Icon name={icon} />
                  </button>
                ))}
              </div>
            </section>
          </div>
          <div className="flex h-[15px] shrink-0 items-stretch leading-[15px]">
            <div className="ml-px flex w-[66px] border-t border-[#333] bg-[#b5b5b5]">
              {navShapes.map((d, i) => (
                <button key={d} type="button" aria-label={["First tab", "Previous tab", "Next tab", "Last tab"][i]} className="flex flex-1 items-center justify-center border-r border-[#8c8c8c]">
                  <svg viewBox="0 0 14 14" className="h-3.5 w-3.5"><path d={d} fill="#8e8e8e" stroke="#8e8e8e" /></svg>
                </button>
              ))}
            </div>
            <button type="button" className="w-14 pl-1 text-center font-bold text-black">Model</button>
            <button type="button" className="w-[109px] border-r border-l border-[#808080] bg-[#d4d4d4] pr-2 text-center">Motion Study 1</button>
          </div>
        </main>

        <aside aria-label="Sketch toolbar" className="flex w-[46px] shrink-0 flex-col overflow-hidden border-l border-white pl-0.5">
          <ToolColumn tools={sketchTools} />
          <button type="button" aria-label="More tools" className="mx-auto mt-5">
            <svg viewBox="0 0 10 10" className="h-2.5 w-2.5"><path d="M1.500 1L5 4.500L8.500 1M1.500 5.500L5 9L8.500 5.500" fill="none" stroke="#223" strokeWidth="1.300" /></svg>
          </button>
          <div className="mt-auto h-px bg-[#8a8a8a]" />
          <div className="h-0.5" />
        </aside>
      </div>

      <footer className="flex h-[18px] shrink-0 items-center pt-px pl-0.5">
        <span className="flex-1">Creates a new assembly of the current part or assembly.</span>
        <span className="w-[119px] border-l border-[#ccc] pl-1">Editing Part</span>
        <span className="w-[55px]">MMGS</span>
        <svg viewBox="0 0 6 4" className="mr-[64px] h-1 w-1.5"><path d="M0 4H6L3 0Z" fill="#222" /></svg>
        <IconButton name="tag" label="Tags" />
      </footer>
      <div className="flex h-[5px] shrink-0 overflow-hidden border-t border-[#26384a] bg-[#a9c9e8]">
        <div className="flex w-[121px] shrink-0 justify-between bg-linear-to-r from-[#7d9cb8] to-[#a9c9e8] pr-4 pl-4"><i className="h-1 w-6 rounded-t-full bg-[#bfe0ee]" /><i className="h-1 w-2 rounded-t-full bg-[#e5dc6a]" /></div>
        {[55, 66, 59, 59, 59, 59, 59, 59, 59, 55].map((w, i) => (
          <div key={i} className="mr-[3px] flex shrink-0 justify-center rounded-t-xs border-x border-t border-[#3c566f] bg-[#dbe9f5]" style={{ width: w }}>
            {(i === 5 || i === 8) && <i className="h-1 w-7 bg-[#3fa4d4]" />}
          </div>
        ))}
      </div>
    </div>
  );
}
